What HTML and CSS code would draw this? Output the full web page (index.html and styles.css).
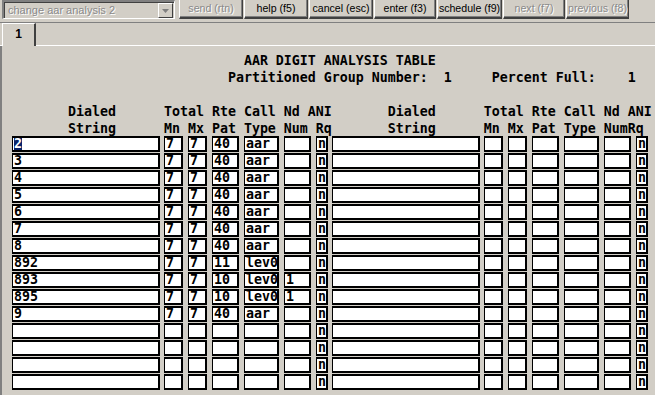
FILE: index.html
```html
<!DOCTYPE html>
<html lang="en">
<head>
    <meta charset="UTF-8">
    <title>change aar analysis 2</title>
    <link rel="stylesheet" href="styles.css">
</head>
<body>

<!-- command bar -->
<div class="toolbar">
    <div class="combo">
        <span class="combo-text">change aar analysis 2</span>
        <span class="drop"><svg width="7" height="4" viewBox="0 0 7 4"><path d="M0 0h7L3.5 4z" fill="#808080"/></svg></span>
    </div>
    <div class="btn off w64">send (rtn)</div>
    <div class="btn w64">help (f5)</div>
    <div class="btn w64">cancel (esc)</div>
    <div class="btn w62">enter (f3)</div>
    <div class="btn w65">schedule (f9)</div>
    <div class="btn off w62">next (f7)</div>
    <div class="btn off w63">previous (f8)</div>
</div>

<div class="tabs">
    <div class="tab">1</div>
</div>

<!-- terminal screen -->
<div class="panel">
    <div class="screen">
<pre class="line">                             AAR DIGIT ANALYSIS TABLE</pre>
<pre class="line">                           Partitioned Group Number:  1     Percent Full:    1</pre>
<pre class="line"> </pre>
<pre class="line">       Dialed      Total Rte Call Nd ANI       Dialed      Total Rte Call Nd ANI</pre>
<pre class="line">       String      Mn Mx Pat Type Num Rq       String      Mn Mx Pat Type NumRq</pre>
        <div class="grid" id="grid"></div>
    </div>
</div>

<script>
    // rows: dialed, mn, mx, rte pat, call type, nd num, ani
    const rows = [
        ['2', '7', '7', '40', 'aar', '', 'n'],
        ['3', '7', '7', '40', 'aar', '', 'n'],
        ['4', '7', '7', '40', 'aar', '', 'n'],
        ['5', '7', '7', '40', 'aar', '', 'n'],
        ['6', '7', '7', '40', 'aar', '', 'n'],
        ['7', '7', '7', '40', 'aar', '', 'n'],
        ['8', '7', '7', '40', 'aar', '', 'n'],
        ['892', '7', '7', '11', 'lev0', '', 'n'],
        ['893', '7', '7', '10', 'lev0', '1', 'n'],
        ['895', '7', '7', '10', 'lev0', '1', 'n'],
        ['9', '7', '7', '40', 'aar', '', 'n']
    ];
    const kinds = ['ds', 'mn', 'mx', 'rte', 'call', 'nd', 'ani'];
    const grid = document.getElementById('grid');

    for (let r = 0; r < 15; r++) {
        const left = rows[r] || ['', '', '', '', '', '', 'n'];
        const right = ['', '', '', '', '', '', 'n'];
        left.concat(right).forEach((val, i) => {
            const cell = document.createElement('div');
            cell.className = 'field ' + kinds[i % 7];
            if (r === 0 && i === 0) {
                const sel = document.createElement('span');
                sel.className = 'sel';
                sel.textContent = val;
                cell.appendChild(sel);
            } else {
                cell.textContent = val;
            }
            grid.appendChild(cell);
        });
    }
</script>

</body>
</html>
```

FILE: styles.css
```css
body {
    margin: 0;
    width: 655px;
    height: 395px;
    overflow: hidden;
    background-color: #d2cec6;
    font-family: "Liberation Sans", Arial, sans-serif;
}

/* top command bar */
.toolbar {
    display: flex;
    gap: 1px;
    height: 20px;
    padding-left: 2px;
}
.combo {
    position: relative;
    width: 170px;
    height: 16px;
    margin-right: 3px;
    border-top: 2px solid #808080;
    border-left: 2px solid #808080;
    border-right: 1px solid #fff;
    border-bottom: 1px solid #fff;
    box-shadow: inset 1px 1px #404040;
}
.combo-text {
    display: block;
    padding: 2px 0 0 4px;
    font-size: 11px;
    color: #8a8a8a;
    text-shadow: 1px 1px #fff;
}
.drop {
    position: absolute;
    right: 1px;
    top: 1px;
    width: 13px;
    height: 13px;
    display: flex;
    align-items: center;
    justify-content: center;
    border-top: 1px solid #fff;
    border-left: 1px solid #fff;
    border-right: 1px solid #404040;
    border-bottom: 1px solid #404040;
}
.btn {
    height: 17px;
    line-height: 17px;
    text-align: center;
    font-size: 10.6px;
    color: #000;
    border-left: 1px solid #fff;
    border-right: 1px solid #404040;
    border-bottom: 2px solid #404040;
    box-shadow: inset -1px -1px #808080;
    white-space: nowrap;
}
.btn.off {
    color: #8a8a8a;
    text-shadow: 1px 1px #fff;
}
.w62 { width: 60px; }
.w63 { width: 61px; }
.w64 { width: 62px; }
.w65 { width: 63px; }

.tabs {
    height: 24px;
    border-top: 1px solid #808080;
    border-bottom: 1px solid #fff;
    padding-left: 2px;
    margin-top: 2px;
    box-sizing: border-box;
    display: flex;
    align-items: flex-end;
}
.tab {
    width: 31px;
    height: 22px;
    margin-bottom: -1px;
    background-color: #d2cec6;
    border-left: 1px solid #fff;
    border-top: 1px solid #fff;
    border-right: 2px solid #404040;
    text-align: center;
    font-size: 12px;
    font-weight: bold;
    line-height: 20px;
}

/* terminal area */
.panel {
    height: 349px;
    border-left: 2px solid #808080;
}
.screen {
    padding: 4px 0 0 10px;
    font-family: "DejaVu Sans Mono", monospace;
    font-weight: bold;
    font-size: 13.29px;
    color: #000;
}
.line {
    margin: 0;
    box-sizing: border-box;
    height: 17px;
    padding-top: 3px;
    line-height: 17px;
    font: inherit;
    white-space: pre;
}
.grid {
    display: grid;
    grid-template-columns: 152px 24px 24px 32px 40px 32px 16px 152px 24px 24px 32px 40px 32px 16px;
    grid-auto-rows: 17px;
}
.field {
    box-sizing: border-box;
    height: 16px;
    margin-top: 1px;
    background-color: #fff;
    border: 2px solid #000;
    border-left-width: 1px;
    padding-left: 1px;
    line-height: 12px;
    white-space: pre;
    overflow: hidden;
}
.ds { width: 148px; }
.mn, .mx { width: 19px; }
.rte { width: 27px; }
.call { width: 35px; }
.nd { width: 27px; }
.ani { width: 12px; }
.sel {
    background-color: #0a246a;
    color: #fff;
}
```
